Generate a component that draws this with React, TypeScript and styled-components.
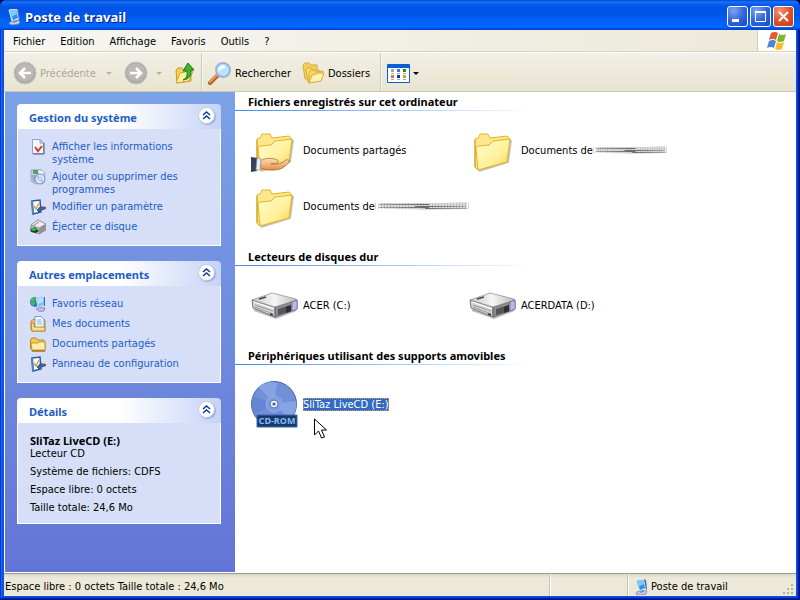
import React from 'react';
import styled, { createGlobalStyle } from 'styled-components';

const GlobalStyle = createGlobalStyle`
  * { box-sizing: border-box; }
  body {
    margin: 0;
    background: #000a50;
    font: 11px/13px "DejaVu Sans Condensed", Tahoma, "DejaVu Sans", sans-serif;
    color: #000;
    cursor: default;
  }
  button {
    font: inherit;
    color: inherit;
    background: none;
    border: 0;
    padding: 0;
  }
  svg { display: block; flex: none; }
`;

const Window = styled.div`
  display: flex;
  flex-direction: column;
  min-height: 100vh;
  padding: 0 4px 4px;
  border-radius: 7px 7px 0 0;
  background: #0855dd;
  box-shadow: inset -1px -1px #00138c, inset 1px 1px #0831d9,
    inset -2px -2px #001ea0, inset 2px 2px #166aee,
    inset -3px -3px #0441d8, inset 3px 3px #0855dd;
`;

const TitleBar = styled.header`
  display: flex;
  align-items: center;
  height: 30px;
  margin: 0 -4px;
  padding: 3px 6px 0 6px;
  border-radius: 7px 7px 0 0;
  background: linear-gradient(#0046d0 0, #1a72f4 2px, #0a5ff0 4px, #0054e5 7px, #0055e8 14px, #0064fa 23px, #0066ff 27px, #0048d8 29px, #003dd0 30px);
`;

const Title = styled.h1`
  flex: 1;
  margin: 0 0 0 3px;
  font: bold 13px/18px "Open Sans", "Noto Sans", sans-serif;
  color: #fff;
  text-shadow: 1px 1px #0a1883;
`;

const Caption = styled.button<{ $close?: boolean }>`
  width: 21px;
  height: 21px;
  margin-left: 2px;
  border: 1px solid #fff;
  border-radius: 3px;
  background: ${p => p.$close
    ? 'radial-gradient(circle at 30% 20%, #f0957c, #e0512c 50%, #c43a12)'
    : 'radial-gradient(circle at 30% 20%, #7fa4f4, #3266e0 50%, #1846c8)'};
`;

const MenuRow = styled.div`
  display: flex;
  height: 23px;
  background: linear-gradient(90deg, #f6f6f3, #ece9d8);
  border-bottom: 1px solid #fff;
`;

const Menu = styled.nav`
  flex: 1;
  display: flex;
  align-items: center;
  gap: 1px;
  padding: 1px 0 0 2px;
  border-bottom: 1px solid #d8d2bd;
`;

const MenuItem = styled.button`
  padding: 3px 7px;
`;

const Brand = styled.div`
  display: flex;
  align-items: center;
  justify-content: center;
  width: 39px;
  border-left: 1px solid #d0cbb8;
  border-bottom: 1px solid #d8d2bd;
  background: #fff;
`;

const Toolbar = styled.div`
  display: flex;
  align-items: center;
  height: 39px;
  padding-left: 9px;
  background: linear-gradient(#f2f0e8, #ece9d8 60%, #e8e4d0);
  border-bottom: 1px solid #cdc9b6;
`;

const ToolGroup = styled.div`
  display: flex;
  gap: 12px;
`;

const ToolButton = styled.button<{ $width: number; $muted?: boolean }>`
  display: flex;
  align-items: center;
  gap: 3px;
  width: ${p => p.$width}px;
  height: 36px;
  padding-top: 2px;
  white-space: nowrap;
  color: ${p => (p.$muted ? '#aca899' : '#000')};
`;

const ToolDivider = styled.div`
  width: 2px;
  align-self: stretch;
  margin-right: 5px;
  border-left: 1px solid #cfcab6;
  border-right: 1px solid #f8f7f0;
`;

const Caret = styled.span<{ $muted?: boolean }>`
  margin-left: auto;
  border: 3px solid transparent;
  border-top-color: ${p => (p.$muted ? '#b8b4a4' : '#000')};
  border-bottom: 0;
`;

const Content = styled.div`
  flex: 1;
  display: flex;
  border: solid #fff;
  border-width: 0 0 1px 1px;
  background: #fff;
`;

const Sidebar = styled.aside`
  display: flex;
  flex-direction: column;
  gap: 15px;
  width: 230px;
  flex: none;
  padding: 12px 14px 12px 12px;
  background: linear-gradient(#7ba2e7, #6375d6);
`;

const PanelHeader = styled.div`
  display: flex;
  align-items: center;
  justify-content: space-between;
  height: 25px;
  padding: 0 6px 0 12px;
  border-radius: 4px 4px 0 0;
  background: linear-gradient(90deg, #fff 50%, #c6d3f7);
`;

const PanelTitle = styled.h2`
  margin: 2px 0 0;
  font: bold 11px/14px "Noto Sans", sans-serif;
  color: #215dc6;
`;

const Collapse = styled.button`
  display: grid;
  place-items: center;
  width: 17px;
  height: 17px;
  margin-bottom: 2px;
  border: 1px solid #c3cbe2;
  border-radius: 50%;
  background: #fff;
  box-shadow: 1px 1px 1px #9aa8d4;
`;

const PanelBody = styled.div<{ $gap: number }>`
  display: flex;
  flex-direction: column;
  gap: ${p => p.$gap}px;
  padding: 11px 12px 9px;
  border: solid #fff;
  border-width: 0 1px 1px;
  background: #d6dff7;
`;

const TaskLink = styled.a`
  display: flex;
  gap: 6px;
  min-height: 16px;
  color: #215dc6;
  text-decoration: none;
  & > svg { margin: -1px 0; }
`;

const TaskText = styled.span`
  flex: 1;
  max-width: 138px;
`;

const Detail = styled.p`
  margin: 0;
  & strong { display: block; font: bold 11px/13px "Noto Sans", sans-serif; }
`;

const Main = styled.main`
  flex: 1;
  min-width: 0;
  display: flex;
  flex-direction: column;
  gap: 14px;
  padding-top: 1px;
`;

const GroupTitle = styled.h2`
  height: 18px;
  margin: 0 0 11px;
  padding: 1px 0 0 13px;
  font: bold 11px/15px "Noto Sans", sans-serif;
  background: linear-gradient(90deg, #3f8af0, #fff) 0 100% / 300px 1px no-repeat;
`;

const Tiles = styled.div`
  display: grid;
  grid-template-columns: repeat(auto-fill, 218px);
  grid-auto-rows: 56px;
  padding-left: 15px;
`;

const Tile = styled.div`
  position: relative;
  display: flex;
  align-items: center;
  gap: 5px;
  white-space: nowrap;
`;

const TileLabel = styled.span<{ $selected?: boolean }>`
  display: flex;
  align-items: center;
  ${p => p.$selected && 'background: #316ac5; color: #fff; outline: 1px dotted #d9a04a; outline-offset: -1px;'}
`;

const Pointer = styled.svg`
  position: absolute;
  left: 64px;
  top: 42px;
`;

const StatusBar = styled.footer`
  display: flex;
  height: 23px;
  background: linear-gradient(#dcd8c6, #ece9d8 4px);
  border-top: 1px solid #9d9a8c;
`;

const StatusCell = styled.div<{ $width?: number }>`
  display: flex;
  align-items: center;
  gap: 2px;
  padding: 3px 1px 0;
  white-space: nowrap;
  ${p => (p.$width ? `width: ${p.$width}px;` : 'flex: 1;')}
  & + & {
    padding-left: 5px;
    border-left: 1px solid #c9c5b2;
    box-shadow: inset 1px 0 #fff;
  }
`;

const Grip = styled.svg`
  margin-left: auto;
  align-self: flex-end;
`;

const Computer = () => (
  <svg width="16" height="16" viewBox="0 0 16 16">
    <path d="M4 13l4-2 6 1-1 3-6 1-4-1z" fill="#c9cfe6" stroke="#6d78ac" strokeWidth=".7" />
    <path d="M3 1l8-1 2 10-7 2z" fill="#b9dcf8" stroke="#dce9f8" />
    <path d="M4 2l6-1 2 8-5 2z" fill="#2d93ea" />
    <path d="M4 2l6-1 1 4-6 3z" fill="#7ccaf9" />
    <path d="M11 0l2 1 1 9-1 1z" fill="#4c60b5" />
    <path d="M6 12l5-1v2l-4 1z" fill="#7e8cbb" />
  </svg>
);

const Flag = () => (
  <svg width="22" height="19" viewBox="0 0 22 19">
    <path d="M5 2q4-2 7 0l-2 7q-3-2-7 0z" fill="#e8592b" />
    <path d="M13 3q4 2 7 0l-2 7q-4 2-7 0z" fill="#77b82e" />
    <path d="M3 10q4-2 7 0l-2 7q-3-2-7 0z" fill="#4a86d8" />
    <path d="M11 11q3 2 7 0l-2 7q-4 2-7 0z" fill="#f8bf24" />
  </svg>
);

const NavCircle = ({ forward }: { forward?: boolean }) => (
  <svg width="24" height="24" viewBox="0 0 24 24">
    <circle cx="12" cy="12" r="11" fill="#aeada9" stroke="#c4c2bc" />
    <circle cx="12" cy="11" r="9" fill="#bab9b5" />
    <path
      d={forward ? 'M6 12h11M12 7l5 5-5 5' : 'M18 12H7M12 7l-5 5 5 5'}
      fill="none" stroke="#fff" strokeWidth="2.500"
    />
  </svg>
);

const UpFolder = () => (
  <svg width="22" height="22" viewBox="0 0 22 22">
    <path d="M2 8l2-2h4l2 2 7-1v12L3 21z" fill="#f5d158" stroke="#c79a26" />
    <path d="M2 21l4-10 5-1 1-1h7l-4 10z" fill="#fdf0a0" stroke="#d0a12d" />
    <path d="M9 18q5-2 4-9H9l5-8 6 7h-3q1 9-8 10z" fill="#3db52f" stroke="#177a19" />
  </svg>
);

const Search = () => (
  <svg width="24" height="24" viewBox="0 0 24 24">
    <path d="M2 22l8-8" stroke="#a8622e" strokeWidth="4" strokeLinecap="round" />
    <path d="M2 21l8-8" stroke="#ed9b50" strokeWidth="2" strokeLinecap="round" />
    <circle cx="15" cy="9" r="7" fill="#b9e3fb" stroke="#9bb2dc" strokeWidth="2" />
    <path d="M10 9q1-5 6-5l2 3q-5 0-7 4z" fill="#f5fcff" />
  </svg>
);

const Folders = () => (
  <svg width="23" height="22" viewBox="0 0 23 22">
    <path d="M1 3l2-2h4l2 2h6v12L3 17z" fill="#f5ce55" stroke="#d9aa3a" />
    <path d="M4 8l2-2h3l2 2h6v10L6 20z" fill="#fbe285" stroke="#d9aa3a" />
    <path d="M7 10l2-2h4l1 2 7-1-2 9L7 21z" fill="#f8d462" stroke="#d9aa3a" />
    <path d="M7 21l3-8 4-1 1-1h7l-3 8z" fill="#fef3ab" stroke="#d9aa3a" />
  </svg>
);

const Views = () => {
  const colours = ['#a4a0cc', '#3d78da', '#149714', '#f06c43', '#073da9', '#d2a51c'];
  return (
    <svg width="23" height="19" viewBox="0 0 23 19">
      <rect width="23" height="19" rx="1" fill="#0b5ed7" />
      <rect x="1" y="4" width="21" height="14" fill="#fff" />
      {colours.map((c, i) => (
        <g key={c} transform={`translate(${4 + (i % 3) * 6} ${5 + Math.floor(i / 3) * 6})`}>
          <rect width="3" height="3" fill={c} />
          <path d="M0 4.500h3" stroke="#aaa" />
        </g>
      ))}
    </svg>
  );
};

const SysInfo = () => (
  <svg width="16" height="16" viewBox="0 0 16 16">
    <path d="M2.500 .500h8l3 3v11h-11z" fill="#f3f7ff" stroke="#8fa2c8" />
    <path d="M10 1v3h3" fill="#b8c8e8" stroke="#8fa2c8" />
    <path d="M3 15h11V4" fill="none" stroke="#4c6190" />
    <path d="M5 8l3 4 4-5" fill="none" stroke="#e8361c" strokeWidth="2" />
  </svg>
);

const Programs = () => (
  <svg width="16" height="16" viewBox="0 0 16 16">
    <path d="M1 1l9-1 5 4-1 10-9 1-4-3z" fill="#c9d3ea" stroke="#8d9abd" strokeWidth=".7" />
    <path d="M3 1h5v4H3z" fill="#54a45a" />
    <path d="M9 2h4v4H9z" fill="#f3f5fc" />
    <path d="M1 6h6v8l-4-1z" fill="#9aabd4" />
    <circle cx="10" cy="10" r="5" fill="#dfe6fb" stroke="#7b89ba" />
    <path d="M10 10l-4-2 2-2zM10 10l4 2-2 2z" fill="#91c9ee" />
    <circle cx="10" cy="10" r="1.500" fill="#fff" stroke="#8b96bd" strokeWidth=".7" />
  </svg>
);

const Settings = () => (
  <svg width="16" height="16" viewBox="0 0 16 16">
    <path d="M2 2l8-1 1 12-8 2z" fill="#f7faff" stroke="#2c5a9d" strokeWidth="1.500" />
    <path d="M1 2l2-1 1 13-2 1z" fill="#4f82c3" />
    <path d="M4 7l2 3 3-6" fill="none" stroke="#dfa53c" strokeWidth="1.500" />
    <path d="M7 11l3-3h5v2l-4 1-2 2z" fill="#2b6cb4" stroke="#173f77" strokeWidth=".7" />
    <path d="M13 8h3v2h-3z" fill="#8c5430" />
  </svg>
);

const Eject = () => (
  <svg width="16" height="16" viewBox="0 0 16 16">
    <path d="M1 6l7-5 8 4v6l-7 4-8-3z" fill="#c4c4c4" stroke="#777" strokeWidth=".7" />
    <path d="M1 6l7-5 8 4-7 4z" fill="#eee" stroke="#888" strokeWidth=".7" />
    <path d="M9 9l7-4v6l-7 4z" fill="#929292" />
    <path d="M3 7l6-4" stroke="#888" />
    <path d="M0 10l5-2 4 4-3 2-5-1z" fill="#1e3d24" />
    <path d="M0 11l4-3 3 3-3 1z" fill="#3ebf3c" />
  </svg>
);

const Network = () => (
  <svg width="16" height="16" viewBox="0 0 16 16">
    <circle cx="5" cy="6" r="5" fill="#2f74d9" />
    <path d="M1 3l3-2 2 2-2 2 1 3-2 2-2-3z" fill="#44bd47" />
    <path d="M6 2l8-2 1 9-7 2z" fill="#79c4f6" stroke="#cfdcf2" />
    <path d="M7 3l6-2v5l-5 2z" fill="#b5e4ff" />
    <path d="M14 1h1v9h-1z" fill="#4964ad" />
    <path d="M6 13l4-2 5 1-1 3-4 1z" fill="#b9bfdb" stroke="#757fae" strokeWidth=".7" />
  </svg>
);

const MyDocuments = () => (
  <svg width="16" height="16" viewBox="0 0 16 16">
    <path d="M1 14V5l3-2h10l1 2v10H2z" fill="#f3c75c" stroke="#ba872b" />
    <path d="M5 .500h6l3 3v8H5z" fill="#f5faff" stroke="#7199cb" />
    <path d="M7 4h4M7 6h5M7 8h5" stroke="#7fb2e5" />
    <path d="M1 7h3v4h11v4H2z" fill="#fbe08d" stroke="#bb8a30" />
  </svg>
);

const SmallFolder = () => (
  <svg width="16" height="16" viewBox="0 0 16 16">
    <path d="M.500 12V4L2 2h4l2 2h6l1 2v9H2z" fill="#f5ca55" stroke="#b9862a" />
    <path d="M1 7h7l1-1h6v8H2z" fill="#fdf0a2" stroke="#c8963a" />
    <path d="M2 15h13" stroke="#8f6925" />
  </svg>
);

const Folder = ({ shared }: { shared?: boolean }) => (
  <svg width="48" height="48" viewBox="0 0 48 48">
    <defs>
      <linearGradient id="flap" x1="0" y1="0" x2="1" y2="1">
        <stop offset="0" stopColor="#fffdd0" />
        <stop offset=".6" stopColor="#fff09a" />
        <stop offset="1" stopColor="#f6cf45" />
      </linearGradient>
      <linearGradient id="skin" x1="0" y1="0" x2="0" y2="1">
        <stop offset="0" stopColor="#fde0b4" />
        <stop offset="1" stopColor="#e08e48" />
      </linearGradient>
    </defs>
    <path d="M11 45l29-9 3-22" fill="none" stroke="#888" strokeOpacity=".5" strokeWidth="2" />
    <path d="M7 13l3-1 2-4 8 0 2 4 17-2 3 3-3 23-29 8-3-3z" fill="#fbe88c" stroke="#e3b428" strokeLinejoin="round" />
    <path d="M8 22q1-2 3-2l10-1 4-4 17-2-3 23-29 8z" fill="url(#flap)" stroke="#e3b428" strokeLinejoin="round" />
    <path d="M7 14v27l3 3" fill="none" stroke="#cf9d16" />
    {shared && (
      <g>
        <path d="M10 35q6-4 15-2 6 2 2 4l-6 1q9 1 15-4 4-1 3 2-6 8-14 8-8 1-15-2z" fill="url(#skin)" stroke="#a65f2c" strokeWidth=".7" />
        <path d="M15 37q5-2 11 0" fill="none" stroke="#f8c186" />
        <path d="M1 31l7 1-1 13-6 1z" fill="#3b405a" />
        <path d="M7 32l4 1-1 11H6z" fill="#e9edf6" stroke="#8790a8" strokeWidth=".7" />
      </g>
    )}
  </svg>
);

const Drive = () => (
  <svg width="48" height="48" viewBox="0 0 48 48">
    <defs>
      <linearGradient id="lid">
        <stop offset="0" stopColor="#c6c6c6" />
        <stop offset=".5" stopColor="#f6f6f6" />
        <stop offset="1" stopColor="#bbbbbd" />
      </linearGradient>
    </defs>
    <path d="M4 29l22 8 20-8" fill="none" stroke="#bbb" strokeWidth="2" />
    <path d="M2 19l23 7v10L3 27z" fill="#d4d4d4" stroke="#777" />
    <path d="M25 26l22-7v9l-22 8z" fill="#8b8b90" stroke="#666" />
    <path d="M2 19l20-7 24 6 1 1-22 7z" fill="url(#lid)" stroke="#888" strokeWidth=".7" />
    <path d="M28 28l13-4v6l-13 4z" fill="#55555b" />
    <path d="M36 26l5-2v6l-5 2z" fill="#2d2d32" />
    <path d="M42 21l5-2v9l-5 2z" fill="#b9b9ed" stroke="#6f6f98" strokeWidth=".7" />
    <path d="M5 24l18 6M5 26l18 7" stroke="#999" />
    <path d="M4 21l20 7" stroke="#fff" />
    <path d="M9 18l7-2" stroke="#444" strokeWidth="1.500" />
    <path d="M20 33l3 1" stroke="#333" strokeWidth="1.500" />
  </svg>
);

const CdRom = () => (
  <svg width="48" height="48" viewBox="0 0 48 48">
    <circle cx="24" cy="24" r="22.500" fill="#7290da" stroke="#4866a6" />
    <path d="M24 24L9 7q8-7 18-4zM24 24l16 15q8-9 6-18z" fill="#88a3e4" />
    <path d="M24 24L3 16q-3 9 2 18z" fill="#6586d2" />
    <circle cx="24" cy="24" r="8" fill="#809ddf" stroke="#95abec" />
    <circle cx="24" cy="24" r="4" fill="#e9f0ff" stroke="#5b74b0" />
    <circle cx="24" cy="24" r="1.500" fill="#4a5a7f" />
    <path d="M7 35h40v12H7z" fill="#17386b" stroke="#3c69aa" />
    <text x="27" y="44" textAnchor="middle" fontSize="9" fontWeight="bold" fontFamily="Noto Sans, sans-serif" fill="#83bdf4">CD-ROM</text>
  </svg>
);

const Smudge = ({ width }: { width: number }) => (
  <svg width={width} height="9" viewBox="0 0 94 9" preserveAspectRatio="none">
    <defs>
      <linearGradient id="smear">
        <stop offset="0" stopColor="#aaa" />
        <stop offset=".5" stopColor="#666" />
        <stop offset="1" stopColor="#aaa" />
      </linearGradient>
    </defs>
    <path d="M6 1h60l26-1v7l-42 1L4 6z" fill="#ddd" />
    <path d="M4 2h50v1H4zM4 5h50v1H4zM40 4h50v1H40zM50 6h42v1H50z" fill="url(#smear)" />
    <path d="M0 4h94" stroke="#777" strokeWidth="6" strokeDasharray="1 2" strokeOpacity=".35" />
  </svg>
);

const Panel = ({ title, gap = 4, children }: { title: string; gap?: number; children: React.ReactNode }) => (
  <section>
    <PanelHeader>
      <PanelTitle>{title}</PanelTitle>
      <Collapse aria-label={`Réduire ${title}`}>
        <svg width="9" height="9" viewBox="0 0 9 9" fill="none" stroke="#0b3a9e" strokeWidth="1.500">
          <path d="M1 4l3.500-3L8 4M1 8l3.500-3L8 8" />
        </svg>
      </Collapse>
    </PanelHeader>
    <PanelBody $gap={gap}>{children}</PanelBody>
  </section>
);

const Task = ({ icon, children }: { icon: React.ReactNode; children: string }) => (
  <TaskLink href="#">{icon}<TaskText>{children}</TaskText></TaskLink>
);

const Group = ({ title, children }: { title: string; children: React.ReactNode }) => (
  <section>
    <GroupTitle>{title}</GroupTitle>
    <Tiles>{children}</Tiles>
  </section>
);

const menus = ['Fichier', 'Edition', 'Affichage', 'Favoris', 'Outils', '?'];

export default function App() {
  return (
    <Window>
      <GlobalStyle />
      <TitleBar>
        <Computer />
        <Title>Poste de travail</Title>
        <Caption aria-label="Réduire">
          <svg width="19" height="19"><path d="M4 13.500h7" stroke="#fff" strokeWidth="3" /></svg>
        </Caption>
        <Caption aria-label="Agrandir">
          <svg width="19" height="19"><path d="M4.500 5v9.500h10V5M4 5.500h11" fill="none" stroke="#fff" /><path d="M4 5h11" stroke="#fff" strokeWidth="2" /></svg>
        </Caption>
        <Caption $close aria-label="Fermer">
          <svg width="19" height="19"><path d="M5 5l9 9M14 5l-9 9" stroke="#fff" strokeWidth="2" /></svg>
        </Caption>
      </TitleBar>
      <MenuRow>
        <Menu>{menus.map(m => <MenuItem key={m}>{m}</MenuItem>)}</Menu>
        <Brand><Flag /></Brand>
      </MenuRow>
      <Toolbar>
        <ToolGroup>
          <ToolButton $width={99} $muted disabled><NavCircle />Précédente<Caret $muted /></ToolButton>
          <ToolButton $width={38} $muted disabled aria-label="Suivante">
            <NavCircle forward /><Caret $muted />
          </ToolButton>
          <ToolButton $width={27} aria-label="Dossier parent"><UpFolder /></ToolButton>
        </ToolGroup>
        <ToolDivider />
        <ToolButton $width={94}><Search />Rechercher</ToolButton>
        <ToolButton $width={78}><Folders />Dossiers</ToolButton>
        <ToolDivider />
        <ToolButton $width={32} aria-label="Affichage"><Views /><Caret /></ToolButton>
      </Toolbar>
      <Content>
        <Sidebar>
          <Panel title="Gestion du système">
            <Task icon={<SysInfo />}>Afficher les informations système</Task>
            <Task icon={<Programs />}>Ajouter ou supprimer des programmes</Task>
            <Task icon={<Settings />}>Modifier un paramètre</Task>
            <Task icon={<Eject />}>Éjecter ce disque</Task>
          </Panel>
          <Panel title="Autres emplacements">
            <Task icon={<Network />}>Favoris réseau</Task>
            <Task icon={<MyDocuments />}>Mes documents</Task>
            <Task icon={<SmallFolder />}>Documents partagés</Task>
            <Task icon={<Settings />}>Panneau de configuration</Task>
          </Panel>
          <Panel title="Détails" gap={5}>
            <Detail><strong>SliTaz LiveCD (E:)</strong>Lecteur CD</Detail>
            <Detail>Système de fichiers: CDFS</Detail>
            <Detail>Espace libre: 0 octets</Detail>
            <Detail>Taille totale: 24,6 Mo</Detail>
          </Panel>
        </Sidebar>
        <Main>
          <Group title="Fichiers enregistrés sur cet ordinateur">
            <Tile><Folder shared /><TileLabel>Documents partagés</TileLabel></Tile>
            <Tile><Folder /><TileLabel>Documents de<Smudge width={74} /></TileLabel></Tile>
            <Tile><Folder /><TileLabel>Documents de<Smudge width={94} /></TileLabel></Tile>
          </Group>
          <Group title="Lecteurs de disques dur">
            <Tile><Drive /><TileLabel>ACER (C:)</TileLabel></Tile>
            <Tile><Drive /><TileLabel>ACERDATA (D:)</TileLabel></Tile>
          </Group>
          <Group title="Périphériques utilisant des supports amovibles">
            <Tile>
              <CdRom />
              <TileLabel $selected>SliTaz LiveCD (E:)</TileLabel>
              <Pointer width="13" height="22" viewBox="0 0 13 22">
                <path d="M.500 1v16l4-4 3 7 3-1-3-7h5z" fill="#fff" stroke="#000" />
              </Pointer>
            </Tile>
          </Group>
        </Main>
      </Content>
      <StatusBar>
        <StatusCell>Espace libre : 0 octets Taille totale : 24,6 Mo</StatusCell>
        <StatusCell $width={78} />
        <StatusCell $width={169}>
          <Computer />Poste de travail
          <Grip width="12" height="12" viewBox="0 0 12 12" fill="#b8b4a2">
            <path d="M8 0h2v2H8zM4 4h2v2H4zM8 4h2v2H8zM0 8h2v2H0zM4 8h2v2H4zM8 8h2v2H8z" />
          </Grip>
        </StatusCell>
      </StatusBar>
    </Window>
  );
}
